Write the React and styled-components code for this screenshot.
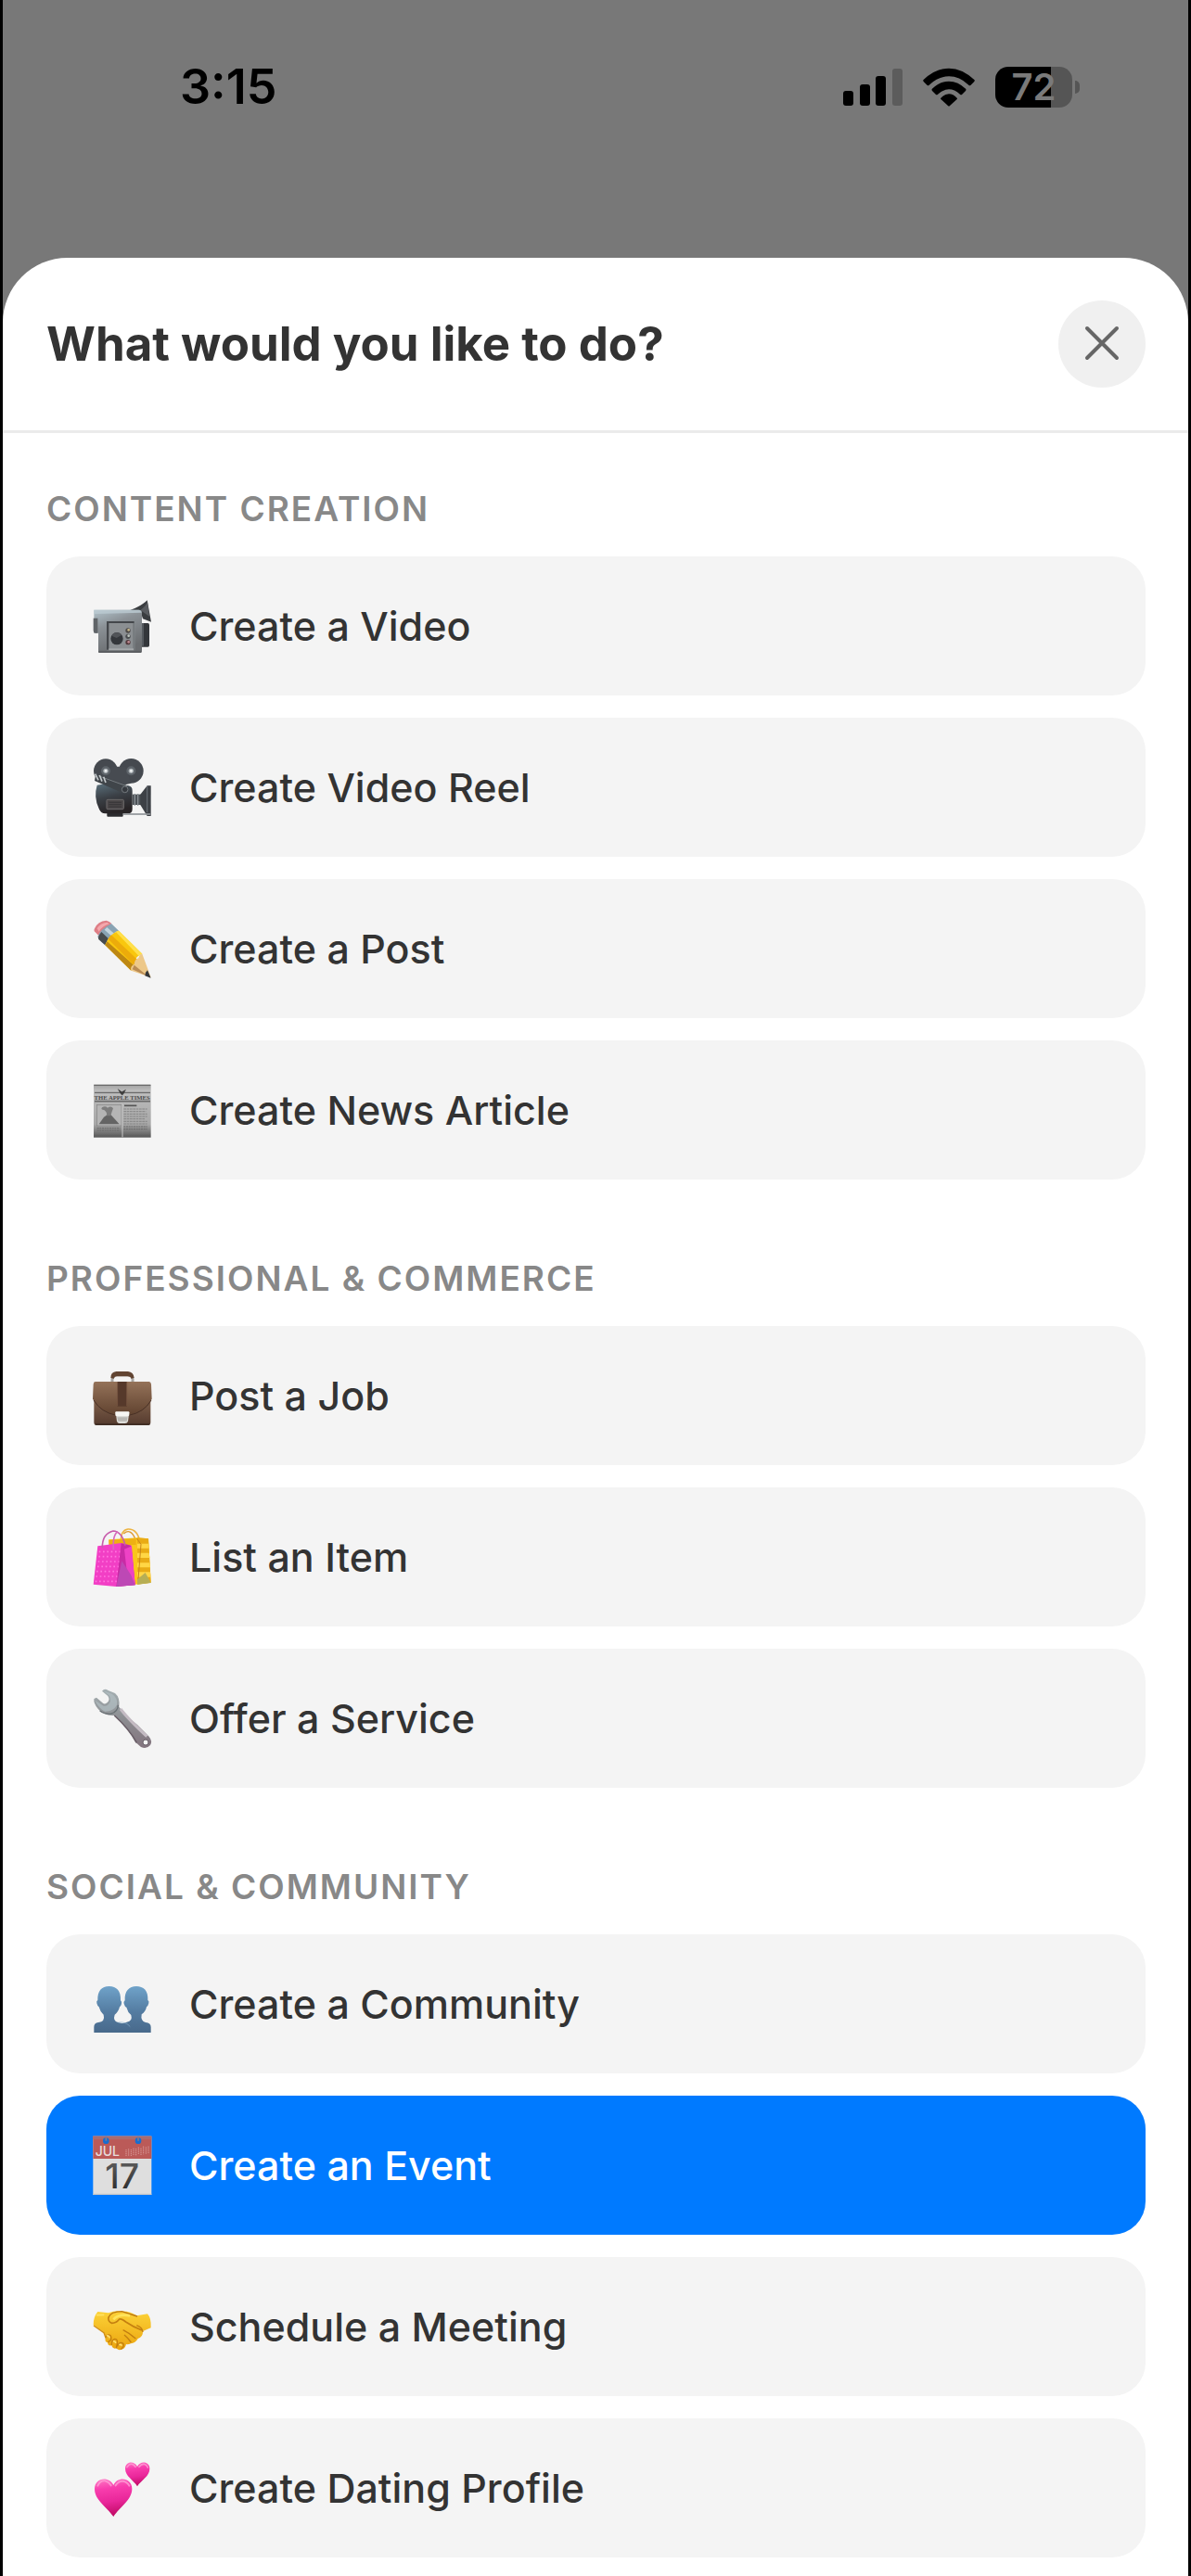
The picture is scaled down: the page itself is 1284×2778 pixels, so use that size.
import React from 'react';
import styled, { createGlobalStyle } from 'styled-components';

const GlobalStyle = createGlobalStyle`
  *, *::before, *::after { box-sizing: border-box; }
  body {
    margin: 0;
    background: #787878;
    font-family: Inter, Roboto, "Liberation Sans", sans-serif;
  }
`;

const Screen = styled.div`
  display: flex;
  flex-direction: column;
  min-height: 100vh;
  background: #787878;
  border: solid #000;
  border-width: 0 3px;
`;

const StatusBar = styled.div`
  display: flex;
  align-items: center;
  justify-content: space-between;
  height: 278px;
  padding: 0 117px 90px 191px;
`;

const Clock = styled.time`
  font-size: 52px;
  line-height: 60px;
  font-weight: 600;
  color: #000;
`;

const Indicators = styled.div`
  display: flex;
  align-items: center;
  gap: 22px;
`;

const Battery = styled.div`
  display: flex;
  align-items: center;
  gap: 3px;
`;

const BatteryBody = styled.div`
  display: flex;
  align-items: center;
  justify-content: center;
  width: 83px;
  height: 44px;
  border-radius: 14px;
  background: linear-gradient(
    to right,
    #000 ${(p) => p.$level}%,
    #555 ${(p) => p.$level}%
  );
  color: #7a7a7a;
  font-size: 40px;
  line-height: 44px;
  font-weight: 600;
`;

const BatteryTip = styled.div`
  width: 5px;
  height: 14px;
  border-radius: 0 5px 5px 0;
  background: #555;
`;

const Sheet = styled.main`
  flex: 1;
  background: #fff;
  border-radius: 70px 70px 0 0;
`;

const SheetHeader = styled.header`
  display: flex;
  align-items: center;
  justify-content: space-between;
  padding: 46px 46px 46px 47px;
  border-bottom: 3px solid #ebebeb;
`;

const Title = styled.h1`
  margin: 0;
  font-size: 51px;
  line-height: 60px;
  font-weight: 700;
  color: #333;
`;

const CloseButton = styled.button`
  display: flex;
  align-items: center;
  justify-content: center;
  width: 94px;
  height: 94px;
  padding: 0;
  border: 0;
  border-radius: 50%;
  background: #f0f0f0;
  cursor: pointer;
`;

const SheetBody = styled.div`
  display: flex;
  flex-direction: column;
  gap: 84px;
  padding: 59px 46px 18px 47px;
`;

const Section = styled.section`
  display: flex;
  flex-direction: column;
  gap: 28px;
`;

const SectionTitle = styled.h2`
  margin: 0;
  font-size: 37px;
  line-height: 46px;
  font-weight: 600;
  letter-spacing: 2px;
  text-transform: uppercase;
  color: #888;
`;

const OptionList = styled.div`
  display: flex;
  flex-direction: column;
  gap: 24px;
`;

const Option = styled.button`
  display: flex;
  align-items: center;
  gap: 40px;
  width: 100%;
  padding: 43px 50px;
  border: 0;
  border-radius: 36px;
  background: ${(p) => (p.$active ? '#007aff' : '#f4f4f4')};
  color: ${(p) => (p.$active ? '#fff' : '#333')};
  font-family: inherit;
  font-size: 43px;
  line-height: 64px;
  font-weight: 500;
  text-align: left;
  cursor: pointer;
`;

const Glyph = styled.svg`
  flex: none;
  width: 64px;
  height: 64px;
  overflow: visible;
`;

function VideoCamera() {
  return (
    <Glyph viewBox="60 39 192 192" aria-hidden="true">
      <defs>
        <linearGradient id="camBody" x1="0" y1="0" x2="0.4" y2="1">
          <stop offset="0" stopColor="#b3c4cc" />
          <stop offset="0.4" stopColor="#8b9196" />
          <stop offset="1" stopColor="#6a6d70" />
        </linearGradient>
      </defs>
      <path d="M170 88C195 80 220 68 236 52L249 122L222 112L215 90Z" fill="#3a3d40" />
      <path d="M214 84C226 76 234 66 237 58L243 104Z" fill="#595c60" />
      <rect x="214" y="126" width="29" height="77" rx="5" fill="#34373b" />
      <rect x="219" y="126" width="6" height="74" fill="#555a5f" />
      <path d="M64 83H210Q219 83 219 92V214Q219 222 211 222H86Q78 222 78 214V158H64Z" fill="url(#camBody)" />
      <path d="M64 83H208Q216 83 218 92L70 96H64Z" fill="#bccbd2" opacity="0.8" />
      <path d="M62 110H76V158H68Q62 158 62 150Z" fill="#606468" />
      <rect x="105" y="120" width="91" height="94" fill="#8b8f92" />
      <path d="M105 120H194V126H112V212H105Z" fill="#44474b" />
      <path d="M190 126H195V214H190Z" fill="#74797c" />
      <rect x="112" y="208" width="80" height="6" fill="#a5a8aa" />
      <circle cx="138" cy="176" r="20" fill="#34373b" />
      <path d="M121 167A20 20 0 0 1 154 164L137 174Z" fill="#515458" />
      <g>
        <circle cx="174" cy="150" r="8" fill="#4f4b48" />
        <circle cx="174" cy="169" r="8" fill="#4a4d4f" />
        <circle cx="174" cy="188" r="8" fill="#53393c" />
        <circle cx="176" cy="148" r="4" fill="#c8b98c" />
        <circle cx="176" cy="167" r="4" fill="#c0c8c0" />
        <circle cx="176" cy="187" r="4" fill="#bd8b92" />
      </g>
      <rect x="78" y="215" width="140" height="7" rx="3" fill="#5c5f62" />
    </Glyph>
  );
}

function MovieCamera() {
  return (
    <Glyph viewBox="60 561 192 192" aria-hidden="true">
      <defs>
        <linearGradient id="reelBody" x1="0" y1="0" x2="0.3" y2="1">
          <stop offset="0" stopColor="#5a6f7b" />
          <stop offset="0.5" stopColor="#3b4046" />
          <stop offset="1" stopColor="#282426" />
        </linearGradient>
      </defs>
      <circle cx="102" cy="604" r="39" fill="#45494f" />
      <circle cx="184" cy="604" r="40" fill="#45494f" />
      <path d="M120 590H166L184 644L158 650L104 632Z" fill="#474b51" />
      <circle cx="102" cy="604" r="15" fill="#5e646a" />
      <circle cx="184" cy="604" r="15" fill="#5e646a" />
      <circle cx="102" cy="604" r="8" fill="#aeb4b8" />
      <circle cx="184" cy="604" r="8" fill="#aeb4b8" />
      <circle cx="102" cy="604" r="4" fill="#f2f4f5" />
      <circle cx="184" cy="604" r="4" fill="#f2f4f5" />
      <rect x="106" y="736" width="52" height="16" rx="3" fill="#2b2b2e" />
      <path d="M74 650Q110 642 176 652Q188 655 188 668V728Q188 742 172 742H100Q86 742 80 726Q62 688 74 650Z" fill="url(#reelBody)" />
      <path d="M68 624L78 616L172 652Q182 662 172 674Q164 680 154 674L66 636Z" fill="#40454a" />
      <path d="M78 620L172 654" stroke="#91979c" strokeWidth="2" fill="none" />
      <path d="M68 614L78 634M82 618L90 638M95 623L102 642" stroke="#c3c8cb" strokeWidth="5" />
      <circle cx="164" cy="664" r="10" fill="#363a3f" stroke="#74797e" strokeWidth="3" />
      <rect x="105" y="697" width="55" height="31" rx="3" fill="#4a4648" stroke="#6e6b6c" strokeWidth="3" />
      <path d="M112 706H153M112 713H153M112 720H153" stroke="#383638" strokeWidth="3" />
      <rect x="188" y="680" width="36" height="34" fill="#4c5156" />
      <path d="M196 678V716M206 678V716" stroke="#888e93" strokeWidth="4" />
      <path d="M214 680L236 652H248V750H236L214 714Z" fill="#3d4146" />
      <path d="M236 654V738" stroke="#6d7379" strokeWidth="3" />
      <path d="M158 744H246" stroke="#909498" strokeWidth="5" />
    </Glyph>
  );
}

function Pencil() {
  return (
    <Glyph viewBox="60 63 192 192" aria-hidden="true">
      <path d="M66 94Q76 70 104 68Q114 70 121 78L84 122L68 106Q62 102 66 94Z" fill="#de7e86" />
      <path d="M74 94Q84 76 106 74L114 79Q92 84 80 104Z" fill="#f4a7ac" />
      <path d="M76 120Q84 96 120 78L144 101Q118 108 100 148L79 128Z" fill="#89a3b3" />
      <path d="M78 122Q82 112 88 105L110 126L100 148L79 129Z" fill="#474b4d" />
      <path d="M98 98L106 90L130 111L120 118Z" fill="#c3d5df" />
      <path d="M144 101L220 176Q196 180 184 230L100 148Q112 112 144 101Z" fill="#f9c70e" />
      <path d="M107 136L194 214L184 230L100 148Z" fill="#bd8713" />
      <path d="M110 128Q114 120 120 115L204 194L195 214Z" fill="#ecab0b" />
      <path d="M134 104L144 101L220 176L209 183Z" fill="#ffe04b" />
      <path d="M220 176L248 252L184 230Q180 216 194 210Q196 192 208 190Q210 178 220 176Z" fill="#edc889" />
      <path d="M188 226L194 212L240 250Z" fill="#b98b54" />
      <path d="M237 229L248 254L229 247Q228 237 237 229Z" fill="#33363a" />
    </Glyph>
  );
}

function Newspaper() {
  return (
    <Glyph viewBox="60 585 192 192" aria-hidden="true">
      <defs>
        <linearGradient id="paper" x1="0" y1="0" x2="0" y2="1">
          <stop offset="0" stopColor="#a2a2a2" />
          <stop offset="0.12" stopColor="#bdbdbd" />
          <stop offset="0.75" stopColor="#a8a8a8" />
          <stop offset="1" stopColor="#555" />
        </linearGradient>
      </defs>
      <rect x="63" y="599" width="185" height="171" fill="url(#paper)" />
      <path d="M64 601H247" stroke="#6b6b6b" strokeWidth="4" />
      <path d="M66 625H246" stroke="#686868" strokeWidth="4" />
      <path d="M140 612L154 622L168 614L160 629L155 634L149 628Z" fill="#3f3f3f" />
      <text x="155" y="647" textAnchor="middle" fontFamily="Liberation Serif, serif" fontWeight="700" fontSize="20" fill="#4d4d4d">THE APPLE TIMES</text>
      <path d="M66 653H246" stroke="#6a6a6a" strokeWidth="5" />
      <rect x="73" y="664" width="80" height="68" fill="#b5b5b5" stroke="#818181" strokeWidth="2" />
      <path d="M80 727L96 704L108 696H118L129 708L146 727Z" fill="#646464" />
      <path d="M104 700Q108 690 98 682Q84 680 90 673Q100 666 108 674Q120 666 126 676Q122 686 118 700Z" fill="#7c7c7c" />
      <path d="M162 667H202" stroke="#555" strokeWidth="5" />
      <path d="M160 678H236M160 686H232M160 694H236M160 702H236M160 710H230M160 718H236M160 726H236" stroke="#858585" strokeWidth="3" strokeDasharray="8 2" />
      <path d="M74 740H148M74 747H148M160 735H236M160 743H236" stroke="#686868" strokeWidth="3" strokeDasharray="6 2" />
      <path d="M156 660V769" stroke="#c7c7c7" strokeWidth="3" />
    </Glyph>
  );
}

function Briefcase() {
  return (
    <Glyph viewBox="60 39 192 192" aria-hidden="true">
      <defs>
        <linearGradient id="leather" x1="0" y1="0" x2="0" y2="1">
          <stop offset="0" stopColor="#86664f" />
          <stop offset="1" stopColor="#543a2e" />
        </linearGradient>
        <linearGradient id="flap" x1="0" y1="0" x2="0" y2="1">
          <stop offset="0" stopColor="#947259" />
          <stop offset="1" stopColor="#60422f" />
        </linearGradient>
      </defs>
      <path d="M123 94V84Q124 70 136 68H176Q188 70 189 82V94" fill="none" stroke="#aaa7a4" strokeWidth="9" />
      <path d="M118 78Q118 59 136 57H174Q192 59 194 78L184 80Q182 73 172 73H138Q130 73 128 80Z" fill="#614432" />
      <path d="M64 136H247V222Q247 231 238 231H73Q64 231 64 222Z" fill="url(#leather)" />
      <path d="M64 92Q64 90 70 90H242Q248 90 249 98L251 146Q230 190 176 199H136Q84 188 60 146L62 98Z" fill="url(#flap)" />
      <path d="M63 150Q86 189 136 199M176 199Q226 190 249 150" fill="none" stroke="#493126" strokeWidth="3" />
      <rect x="140" y="90" width="30" height="80" fill="#56392b" />
      <path d="M140 92V168M170 92V168" stroke="#7a5843" strokeWidth="2" />
      <path d="M134 188H178L174 218Q172 225 164 225H147Q140 225 138 218Z" fill="#deddd9" />
      <path d="M139 205H173L170 218H142Z" fill="#b9b7b3" />
      <rect x="133" y="187" width="45" height="14" rx="3" fill="#f7f6f3" />
      <path d="M68 228H244" stroke="#3b2a22" strokeWidth="4" />
    </Glyph>
  );
}

function ShoppingBags() {
  return (
    <Glyph viewBox="60 561 192 192" aria-hidden="true">
      <path d="M151 610Q150 570 174 567Q205 566 213 610" fill="none" stroke="#edb443" strokeWidth="5" />
      <path d="M160 582Q182 562 198 600" fill="none" stroke="#dc9931" strokeWidth="4" />
      <path d="M112 601L204 595L240 598L248 740L198 746L124 720Z" fill="#fac51c" />
      <path d="M204 595L240 598L248 740L205 746Z" fill="#e9ab15" />
      <path d="M112 602L200 597V618H112Z" fill="#eeb013" />
      <path d="M204 614H241L242 629H204ZM204 644H242L244 660H204ZM204 676H245L246 691H204ZM204 706H246L247 722H204Z" fill="#ffd645" />
      <path d="M202 597L216 616L206 742" fill="none" stroke="#c98519" strokeWidth="3" />
      <path d="M204 730L230 708L248 741L204 746Z" fill="#b6ae55" />
      <path d="M76 622L152 612L184 620L197 748L136 753L62 746Z" fill="#f23fc5" />
      <path d="M152 613L184 620L197 748L136 753Z" fill="#c82ba5" />
      <path d="M162 632L186 622L197 748L172 719Z" fill="#ee42c5" />
      <path d="M154 670L184 716L197 748L136 753Z" fill="#bd48b5" />
      <path d="M80 640H148M79 656H147M77 672H145M75 688H143M72 704H141M70 720H139M68 736H137" stroke="#ff75de" strokeWidth="5" strokeDasharray="5 8" />
      <path d="M91 628Q90 582 126 573Q154 574 165 620" fill="none" stroke="#c75cab" strokeWidth="5" />
      <path d="M127 634Q124 584 141 575" fill="none" stroke="#d86abd" strokeWidth="5" />
    </Glyph>
  );
}

function Wrench() {
  return (
    <Glyph viewBox="60 63 192 192" aria-hidden="true">
      <defs>
        <linearGradient id="steel" x1="0" y1="0" x2="0" y2="1">
          <stop offset="0" stopColor="#a4afb2" />
          <stop offset="0.5" stopColor="#8c8d91" />
          <stop offset="1" stopColor="#83747e" />
        </linearGradient>
      </defs>
      <path d="M90 71Q98 61 110 69L132 78Q149 92 145 122Q168 152 204 180L242 218Q254 233 246 246Q234 260 216 252L198 236Q178 196 130 150Q96 152 78 130Q62 112 64 96L72 92L94 111Q100 115 107 108Q117 99 109 87Z" fill="url(#steel)" />
      <path d="M94 70L122 80Q142 93 138 116Q126 137 100 137Q80 129 68 101L90 116Q100 124 111 114Q122 103 114 86Z" fill="#b2bfc3" opacity="0.7" />
      <path d="M150 129Q174 161 235 218" fill="none" stroke="#c4bbc3" strokeWidth="9" />
      <path d="M130 150Q178 194 202 238" fill="none" stroke="#695e67" strokeWidth="5" />
      <path d="M142 116Q142 138 117 145Q98 146 83 135" fill="none" stroke="#676f73" strokeWidth="4" />
      <circle cx="231" cy="237" r="9" fill="#f4f4f4" stroke="#685f68" strokeWidth="3" />
    </Glyph>
  );
}

function People() {
  return (
    <Glyph viewBox="60 57 192 192" aria-hidden="true">
      <defs>
        <linearGradient id="bust" gradientUnits="userSpaceOnUse" x1="0" y1="95" x2="0" y2="246">
          <stop offset="0" stopColor="#70a3ca" />
          <stop offset="0.55" stopColor="#547ca1" />
          <stop offset="1" stopColor="#48698b" />
        </linearGradient>
      </defs>
      <path
        d="M113 96C88 96 75 112 76 141Q71 144 73 151Q75 160 80 163Q84 179 95 188Q101 210 78 213Q64 214 64 228V246H248V228Q248 214 231 213Q214 209 218 187Q231 178 234 163Q239 160 241 151Q243 144 238 141C240 110 224 96 201 96C177 96 162 112 164 142Q158 147 162 155Q164 163 169 164Q173 180 184 189Q190 209 170 212Q160 216 156 216Q152 216 142 213Q124 209 131 188Q143 179 147 163Q151 161 153 153Q155 146 150 142C152 111 137 96 113 96Z"
        fill="url(#bust)"
      />
      <path d="M142 213Q168 210 181 227" fill="none" stroke="#86acc9" strokeWidth="2" />
    </Glyph>
  );
}

function Calendar() {
  return (
    <Glyph viewBox="60 579 192 192" aria-hidden="true">
      <defs>
        <linearGradient id="digits" x1="0" y1="0" x2="0" y2="1">
          <stop offset="0" stopColor="#666" />
          <stop offset="1" stopColor="#222" />
        </linearGradient>
      </defs>
      <rect x="61" y="581" width="189" height="190" fill="#dedede" />
      <rect x="61" y="581" width="189" height="73" fill="#bb5a58" />
      <path d="M61 581H250V592H61Z" fill="#a96c70" />
      <circle cx="103" cy="596" r="10" fill="#176dd0" />
      <circle cx="207" cy="596" r="10" fill="#176dd0" />
      <path d="M103 581V596M207 581V596" stroke="#7d7892" strokeWidth="5" />
      <text x="68" y="644" fontFamily="Inter, sans-serif" fontSize="42" fontWeight="500" fill="#e7dddd">JUL</text>
      <path d="M168 624V645M176 622V645M184 624V645M192 620V643M200 621V645M208 617V641M216 620V642M224 614V640M232 616V640M240 614V638" stroke="#d89a98" strokeWidth="3" strokeDasharray="4 2" />
      <text x="155" y="751" textAnchor="middle" fontFamily="Inter, sans-serif" fontSize="112" fontWeight="500" fill="url(#digits)">17</text>
      <path d="M61 769H250" stroke="#c3c5ca" strokeWidth="4" />
    </Glyph>
  );
}

function Handshake() {
  return (
    <Glyph viewBox="60 51 192 192" aria-hidden="true">
      <defs>
        <linearGradient id="hands" x1="0" y1="0" x2="0" y2="1">
          <stop offset="0" stopColor="#fcd238" />
          <stop offset="1" stopColor="#eba40e" />
        </linearGradient>
      </defs>
      <path d="M76 99L111 103Q134 94 152 98Q180 96 202 112L237 106Q250 120 248 151L222 162Q223 180 206 186Q198 201 183 202Q174 206 168 204Q165 220 150 222Q141 224 136 217Q125 221 121 208Q109 211 108 198Q98 198 101 183Q101 176 95 165L62 142Q62 115 76 99Z" fill="url(#hands)" />
      <path d="M111 118Q118 98 154 98L204 114" fill="none" stroke="#bd7811" strokeWidth="4" />
      <path d="M111 116Q108 132 122 136Q136 136 146 123Q153 121 167 132Q192 149 219 159" fill="none" stroke="#c58010" strokeWidth="5" />
      <path d="M158 158Q178 168 199 186M162 174Q174 184 184 198M202 143Q221 150 222 165" fill="none" stroke="#c27e10" strokeWidth="4" />
      <path d="M101 184Q106 171 116 175Q121 179 119 190L109 198M121 207Q120 190 131 187Q142 188 139 202L136 217M139 211Q146 196 155 200Q162 203 159 212L151 221" fill="none" stroke="#c47f0e" strokeWidth="4" />
      <path d="M105 177Q113 175 114 184M126 195Q133 193 134 201M145 206Q151 203 154 209" fill="none" stroke="#ffe071" strokeWidth="5" />
      <path d="M127 124Q145 105 180 112" fill="none" stroke="#ffe45b" strokeWidth="8" />
      <path d="M72 110Q81 109 97 109" fill="none" stroke="#ffe262" strokeWidth="5" />
      <path d="M63 144L96 167L102 184" fill="none" stroke="#d18d12" strokeWidth="4" />
    </Glyph>
  );
}

function Hearts() {
  return (
    <Glyph viewBox="60 573 192 192" aria-hidden="true">
      <defs>
        <linearGradient id="pink" x1="0" y1="0" x2="0.15" y2="1">
          <stop offset="0" stopColor="#ff7bc6" />
          <stop offset="0.3" stopColor="#f83dad" />
          <stop offset="0.65" stopColor="#e9279a" />
          <stop offset="1" stopColor="#c30c68" />
        </linearGradient>
      </defs>
      <path d="M127 762C103 728 66 708 66 672C66 634 114 630 127 660C140 630 187 635 187 672C187 708 148 730 127 762Z" fill="url(#pink)" />
      <path d="M76 662Q84 644 100 646Q113 650 119 661M134 661Q143 646 158 647Q172 650 178 662" fill="none" stroke="#ff9ed6" strokeWidth="6" strokeLinecap="round" opacity="0.8" />
      <path d="M204 664C192 644 165 632 165 607C165 582 195 580 204 600C213 580 244 582 244 607C244 632 217 644 204 664Z" fill="url(#pink)" />
      <path d="M171 602Q178 590 187 592Q194 595 198 601M210 601Q217 591 226 592Q235 595 238 603" fill="none" stroke="#ff9ed6" strokeWidth="5" strokeLinecap="round" opacity="0.8" />
    </Glyph>
  );
}

function SignalIcon() {
  return (
    <svg width="64" height="42" viewBox="0 0 64 42" aria-hidden="true">
      <rect x="0" y="25" width="11" height="16" rx="3" />
      <rect x="18" y="18" width="11" height="23" rx="3" />
      <rect x="35" y="9" width="11" height="32" rx="3" />
      <rect x="53" y="1" width="11" height="40" rx="3" fill="#5c5c5c" />
    </svg>
  );
}

function WifiIcon() {
  return (
    <svg width="56" height="42" viewBox="0 0 168 126" aria-hidden="true">
      <path d="M1 40Q40 2 84 2Q128 2 167 40Q168 42 166 45L154 57Q151 59 148 56Q118 28 84 28Q50 28 20 56Q17 59 14 57L2 45Q0 42 1 40Z" />
      <path d="M29 69Q54 44 84 44Q114 44 139 69Q140 72 138 75L126 87Q123 89 120 86Q102 70 84 70Q66 70 48 86Q45 89 42 87L30 75Q28 72 29 69Z" />
      <path d="M58 98Q70 85 84 85Q98 85 110 98Q112 100 110 102L87 123Q84 126 81 123L58 102Q56 100 58 98Z" />
    </svg>
  );
}

const sections = [
  {
    title: 'Content Creation',
    options: [
      { label: 'Create a Video', Icon: VideoCamera },
      { label: 'Create Video Reel', Icon: MovieCamera },
      { label: 'Create a Post', Icon: Pencil },
      { label: 'Create News Article', Icon: Newspaper },
    ],
  },
  {
    title: 'Professional & Commerce',
    options: [
      { label: 'Post a Job', Icon: Briefcase },
      { label: 'List an Item', Icon: ShoppingBags },
      { label: 'Offer a Service', Icon: Wrench },
    ],
  },
  {
    title: 'Social & Community',
    options: [
      { label: 'Create a Community', Icon: People },
      { label: 'Create an Event', Icon: Calendar, active: true },
      { label: 'Schedule a Meeting', Icon: Handshake },
      { label: 'Create Dating Profile', Icon: Hearts },
    ],
  },
];

export default function App() {
  return (
    <>
      <GlobalStyle />
      <Screen>
        <StatusBar>
          <Clock>3:15</Clock>
          <Indicators>
            <SignalIcon />
            <WifiIcon />
            <Battery>
              <BatteryBody $level={72}>72</BatteryBody>
              <BatteryTip />
            </Battery>
          </Indicators>
        </StatusBar>
        <Sheet>
          <SheetHeader>
            <Title>What would you like to do?</Title>
            <CloseButton type="button" aria-label="Close">
              <svg width="40" height="40" viewBox="0 0 40 40" fill="none" stroke="#666" strokeWidth="4" strokeLinecap="round" aria-hidden="true">
                <path d="M4 3L36 35M36 3L4 35" />
              </svg>
            </CloseButton>
          </SheetHeader>
          <SheetBody>
            {sections.map(({ title, options }) => (
              <Section key={title}>
                <SectionTitle>{title}</SectionTitle>
                <OptionList>
                  {options.map(({ label, Icon, active }) => (
                    <Option key={label} type="button" $active={active}>
                      <Icon />
                      {label}
                    </Option>
                  ))}
                </OptionList>
              </Section>
            ))}
          </SheetBody>
        </Sheet>
      </Screen>
    </>
  );
}
